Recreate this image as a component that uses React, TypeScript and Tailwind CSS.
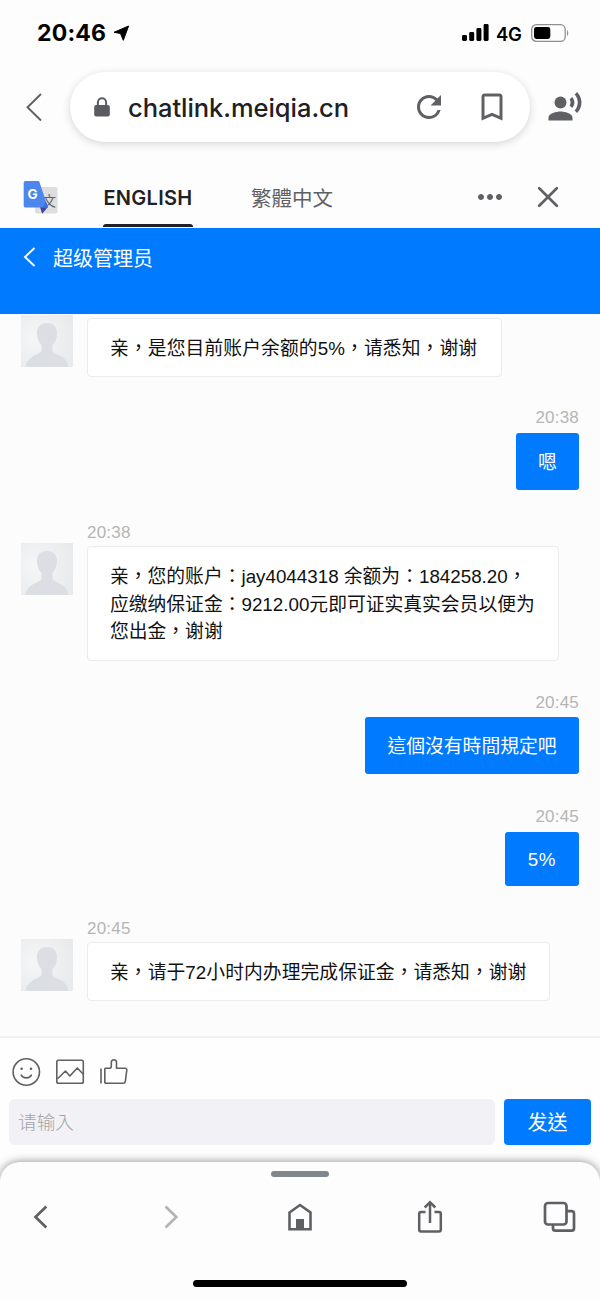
import React from 'react';
import { MdBookmarkBorder, MdMoreHoriz, MdRecordVoiceOver, MdRefresh } from 'react-icons/md';

interface Message {
  from: 'agent' | 'me';
  time?: string;
  lines: string[];
  // vertical rhythm: space above the group, and the bubble's own size
  groupClass: string;
  bubbleClass: string;
}

const messages: Message[] = [
  {
    from: 'agent',
    lines: ['亲，是您目前账户余额的5%，请悉知，谢谢'],
    groupClass: 'mt-1',
    bubbleClass: 'h-[59px] w-[415px] tracking-[0.1px]',
  },
  {
    from: 'me',
    time: '20:38',
    lines: ['嗯'],
    groupClass: 'mt-[30px] gap-1.5',
    bubbleClass: 'h-[57px] w-[63px]',
  },
  {
    from: 'agent',
    time: '20:38',
    lines: ['亲，您的账户：jay4044318 余额为：184258.20，', '应缴纳保证金：9212.00元即可证实真实会员以便为', '您出金，谢谢'],
    groupClass: 'mt-8 gap-1',
    bubbleClass: 'h-[115px] w-[472px]',
  },
  {
    from: 'me',
    time: '20:45',
    lines: ['這個沒有時間規定吧'],
    groupClass: 'mt-[31px] gap-[5px]',
    bubbleClass: 'h-[57px] w-[214px]',
  },
  {
    from: 'me',
    time: '20:45',
    lines: ['5%'],
    groupClass: 'mt-8 gap-1.5',
    bubbleClass: 'h-[54px] w-[74px] tracking-[0.6px]',
  },
  {
    from: 'agent',
    time: '20:45',
    lines: ['亲，请于72小时内办理完成保证金，请悉知，谢谢'],
    groupClass: 'mt-8 gap-1',
    bubbleClass: 'h-[59px] w-[463px] tracking-[0.05px]',
  },
];

const StatusBar: React.FC = () => (
  <div className="flex h-[66px] items-center justify-between pl-[37px] pr-[31px] text-black">
    <div className="flex items-center gap-[7px]">
      <span className="font-['Inter',sans-serif] text-[23px] font-bold leading-none tracking-[0.2px]">20:46</span>
      <svg width="17" height="17" viewBox="0 0 17 17" fill="currentColor" stroke="currentColor" strokeLinejoin="round">
        <path d="M15.600 1 1 7.300l6.500 1.200 2.800 6.800Z" />
      </svg>
    </div>
    <div className="flex items-center">
      <svg width="28" height="18" viewBox="0 0 28 18" fill="currentColor">
        <rect x="0" y="11" width="5" height="6" rx="1.4" />
        <rect x="7.2" y="8" width="5" height="9" rx="1.4" />
        <rect x="14.4" y="4" width="5" height="13" rx="1.4" />
        <rect x="21.6" y="0" width="5" height="17" rx="1.4" />
      </svg>
      <span className="ml-[6px] mt-0.5 w-[28px] font-['Inter',sans-serif] text-[18.5px] font-semibold leading-none tracking-[-0.2px]">4G</span>
      <svg width="38" height="18" viewBox="0 0 38 18" className="ml-[7px]">
        <rect x=".7" y=".7" width="33.5" height="16.6" rx="4.6" fill="none" stroke="#8e8e93" strokeWidth="1.3" />
        <rect x="3" y="3" width="16.3" height="12" rx="2.4" fill="#000" />
        <path d="M36 6c1.6.7 1.6 5.3 0 6Z" fill="#8e8e93" />
      </svg>
    </div>
  </div>
);

const AddressBar: React.FC = () => (
  <div className="flex h-[83px] items-start pt-1.5 text-[#5f6063]">
    <svg width="18" height="30" viewBox="0 0 18 30" fill="none" stroke="currentColor" strokeWidth="1.9" className="ml-[25px] mt-5">
      <path d="M16 2 2.5 15.2 16 28.5" />
    </svg>
    <div className="ml-[27px] flex h-[70px] w-[460px] items-center rounded-full bg-white shadow-[0_2px_8px_rgba(0,0,0,0.16)]">
      <svg width="16" height="20" viewBox="0 0 16 20" className="ml-6">
        <path d="M3.9 9V5.3a4.1 4.1 0 0 1 8.2 0V9" fill="none" stroke="#5a5a63" strokeWidth="2" />
        <rect x=".2" y="8" width="15.6" height="11.4" rx="2" fill="#5a5a63" />
      </svg>
      <span className="ml-[18px] mt-0.5 w-[283px] whitespace-nowrap font-['Inter',sans-serif] text-[25.5px] font-medium leading-none tracking-[-0.05px] text-[#202124]">
        chatlink.meiqia.cn
      </span>
      <MdRefresh size={36} />
      <MdBookmarkBorder size={36} className="ml-[27px]" />
    </div>
    <MdRecordVoiceOver size={36} className="ml-[17px] mt-[17px]" />
  </div>
);

const TranslateLogo: React.FC = () => (
  <svg width="36" height="36" viewBox="0 0 36 36">
    <rect x="12" y="7" width="22.5" height="26.5" rx="2" fill="#dedede" />
    <text x="19.5" y="26" fontSize="13.500" fill="#5f6368" fontFamily="Noto Sans CJK TC, sans-serif">文</text>
    <path d="M17 27h7.800l-5.600 6.700Z" fill="#3b45a8" />
    <path d="M2.500 1h12.300c1 0 1.500.5 1.800 1.400L25 27.500H2.500c-1 0-1.800-.8-1.800-1.800V2.800C.7 1.800 1.500 1 2.500 1Z" fill="#4d86ec" />
    <text x="4.500" y="18.500" fontSize="13.500" fontWeight="700" fill="#fff" fontFamily="Inter, sans-serif">G</text>
    <path d="m22.800 21 2.200 6.500h-5Z" fill="#3b6fdc" />
  </svg>
);

const TranslateBar: React.FC = () => (
  <div className="flex h-[79px] items-end pl-[23px] text-[#5f6063]">
    <div className="mb-[12px]">
      <TranslateLogo />
    </div>
    <div className="ml-11 flex w-[90px] flex-col items-center">
      <span className="font-['Inter',sans-serif] text-[20px] font-semibold leading-none tracking-[0.3px] text-[#202124]">ENGLISH</span>
      <span className="mb-[1px] mt-4 h-[3px] w-[90px] rounded-t-sm bg-[#202124]" />
    </div>
    <span className="mb-5 ml-[58px] w-[84px] whitespace-nowrap font-['Noto_Sans_CJK_TC',sans-serif] text-[20.5px] leading-[22px]">繁體中文</span>
    <MdMoreHoriz size={36} className="mb-[13px] ml-[137px]" />
    <svg width="22" height="22" viewBox="0 0 22 22" fill="none" stroke="currentColor" strokeWidth="2.7" strokeLinecap="round" className="mb-5 ml-[29px]">
      <path d="m2.200 2.200 17.600 17.600M19.800 2.200 2.200 19.800" />
    </svg>
  </div>
);

const ChatHeader: React.FC = () => (
  <div className="relative z-10 flex h-[86px] shrink-0 items-start bg-[#007aff] pl-[23px] text-white">
    <svg width="13" height="20" viewBox="0 0 13 20" fill="none" stroke="currentColor" strokeWidth="1.9" className="mt-[19px]">
      <path d="M11.5 1 2 10l9.5 9" />
    </svg>
    <h1 className="ml-[17px] mt-[18px] font-['Noto_Sans_CJK_SC',sans-serif] text-[20px] font-normal leading-6">超级管理员</h1>
  </div>
);

const Avatar: React.FC = () => (
  <svg width="52" height="52" viewBox="0 0 52 52" className="-mt-[3px] shrink-0">
    <defs>
      <radialGradient id="avatar-bg" cx="30%" cy="45%" r="75%">
        <stop offset="0" stopColor="#f5f6f7" />
        <stop offset="1" stopColor="#e9eaec" />
      </radialGradient>
    </defs>
    <rect width="52" height="52" fill="url(#avatar-bg)" />
    <path
      d="M26 8c-6.500 0-10 4-10 10 0 5 1.500 9 4.500 12v6C17 41 6.500 40 4.500 52h43c-2-12-12.500-11-16-16v-6c3-3 4.500-7 4.500-12 0-6-3.500-10-10-10Z"
      fill="#dbdfe3"
    />
  </svg>
);

const ChatMessage: React.FC<{ message: Message }> = ({ message }) => {
  const { from, time, lines, groupClass, bubbleClass } = message;
  const mine = from === 'me';

  return (
    <div className={`flex flex-col ${mine ? 'items-end' : 'items-start'} ${groupClass}`}>
      {time && (
        <time className={`h-5 pt-px text-[17px] leading-5 tracking-[0.2px] text-[#b5b5b5] ${mine ? '' : 'ml-[66px]'}`}>{time}</time>
      )}
      <div className="flex items-start gap-[14px]">
        {!mine && <Avatar />}
        <div
          className={`flex flex-col justify-center whitespace-nowrap pt-[2px] text-[18.8px] leading-[27.5px] ${bubbleClass} ${
            mine
              ? 'items-center rounded-[3px] bg-[#007aff] text-white'
              : 'rounded-[4px] border border-[#ececee] bg-white pl-[22px] text-[#111]'
          }`}
        >
          {lines.map((line) => (
            <p key={line}>{line}</p>
          ))}
        </div>
      </div>
    </div>
  );
};

const Composer: React.FC = () => (
  <div className="h-[126px] shrink-0 border-t-2 border-[#f0f0f1] bg-[#fefefe]">
    <div className="flex items-center gap-[14px] pl-3 pt-[19px] text-[#606062]">
      <svg width="30" height="30" viewBox="0 0 30 30" fill="none" stroke="currentColor" strokeWidth="1.6">
        <circle cx="14.3" cy="15" r="13.2" />
        <path d="M9.3 18.2c2.2 3.500 7.800 3.500 10 0" strokeLinecap="round" />
        <circle cx="9.6" cy="11.700" r="1.300" fill="currentColor" stroke="none" />
        <circle cx="19" cy="11.700" r="1.300" fill="currentColor" stroke="none" />
      </svg>
      <svg width="30" height="30" viewBox="0 0 30 30" fill="none" stroke="currentColor" strokeWidth="1.6" strokeLinejoin="round">
        <rect x=".8" y="3.3" width="26.500" height="23" rx="1.800" />
        <path d="m1.500 21.800 8-7.800 4.300 5L21.300 11l6 6.300" />
      </svg>
      <svg width="30" height="30" viewBox="0 0 30 30" fill="none" stroke="currentColor" strokeWidth="1.6" strokeLinejoin="round">
        <path d="M1 11.500v15M4.800 11.300v15" />
        <path d="M4.800 11.300h4.600c1.300 0 1.900-.7 1.900-2V5.500c0-3.600 5.200-3.600 5.200 0v5.800h8.600c1.200 0 1.800.8 1.700 1.900l-1.500 11.300c-.2 1.200-.8 1.800-2 1.800H4.800" />
      </svg>
    </div>
    <div className="mt-3 flex h-[46px] gap-[9px] px-[9px] font-['Noto_Sans_CJK_TC',sans-serif]">
      <div className="flex flex-1 items-center rounded-md bg-[#f2f2f6] pb-0.5 pl-[9px] text-[18.7px] font-light text-[#a3a3a8]">请输入</div>
      <button className="w-[87px] rounded-[4px] bg-[#007aff] text-[20px] leading-none text-white">发送</button>
    </div>
  </div>
);

const BrowserNav: React.FC = () => (
  <div className="relative z-10 flex h-[137px] shrink-0 flex-col items-center rounded-t-[20px] bg-[#fdfdfd] pt-[9px] shadow-[0_-1px_9px_rgba(0,0,0,0.38)]">
    <div className="h-1.5 w-[58px] rounded-full bg-[#80868b]" />
    <div className="mt-[22px] flex w-full items-center justify-between px-[22px] text-[#5f6063]">
      <svg width="36" height="36" viewBox="0 0 36 36" fill="none" stroke="currentColor" strokeWidth="2.7">
        <path d="M24.3 7.500 13.500 18l10.800 10.500" />
      </svg>
      <svg width="36" height="36" viewBox="0 0 36 36" fill="none" stroke="#b4b4b6" strokeWidth="2.7">
        <path d="m13.500 7.500 10.800 10.500-10.800 10.500" />
      </svg>
      <svg width="36" height="36" viewBox="0 0 36 36" fill="none" stroke="currentColor" strokeWidth="2.6">
        <path d="M7.500 13.500 18 6l10.500 7.500v16.700h-21Z" />
        <path d="M14 20h8v10h-8Z" fill="currentColor" stroke="none" />
      </svg>
      <svg width="36" height="36" viewBox="0 0 36 36" fill="none" stroke="currentColor" strokeWidth="2.5">
        <path d="M13.500 13H9a1.800 1.800 0 0 0-1.800 1.800v16c0 1 .8 1.700 1.800 1.700h18c1 0 1.800-.7 1.800-1.700v-16c0-1-.8-1.800-1.800-1.800h-4.500" />
        <path d="M18 24V4M12.700 8.500 18 3.200l5.300 5.300" />
      </svg>
      <svg width="36" height="36" viewBox="0 0 36 36" fill="none" stroke="currentColor" strokeWidth="2.7">
        <rect x="3" y="4" width="21.500" height="21.500" rx="3" />
        <path d="M11 26v3.200c0 1.500 1 2.500 2.500 2.500h16c1.500 0 2.500-1 2.500-2.500V14.700c0-1.500-1-2.500-2.500-2.500H25" />
      </svg>
    </div>
    <div className="mt-[45px] h-[7px] w-[214px] rounded-full bg-black" />
  </div>
);

export default function App() {
  return (
    <div lang="zh-Hant" className="flex h-[1299px] w-[600px] flex-col overflow-hidden bg-[#fdfdfd]">
      <StatusBar />
      <AddressBar />
      <TranslateBar />
      <ChatHeader />
      <main className="flex-1 bg-[#fcfcfc] pl-[21px] pr-[21px] font-['Liberation_Sans','Noto_Sans_CJK_TC',sans-serif]">
        {messages.map((message, index) => (
          <ChatMessage key={index} message={message} />
        ))}
      </main>
      <Composer />
      <BrowserNav />
    </div>
  );
}
